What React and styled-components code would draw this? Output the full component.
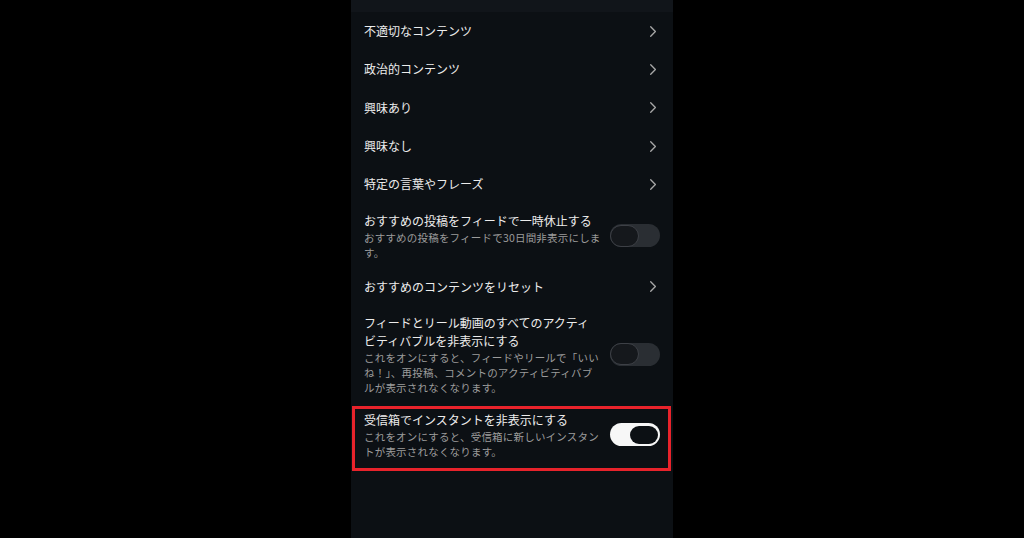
import React from "react";
import styled, { createGlobalStyle } from "styled-components";

const Global = createGlobalStyle`
  html, body { margin: 0; padding: 0; background: #000; }
  body { font-family: "Noto Sans CJK JP", "Noto Sans", sans-serif; }
`;

const Page = styled.div`
  width: 1024px;
  height: 538px;
  background: #000;
  display: flex;
  justify-content: center;
  overflow: hidden;
`;

const Screen = styled.div`
  width: 322px;
  height: 538px;
  background: #0c1014;
  display: flex;
  flex-direction: column;
`;

const TopBand = styled.div`
  height: 12px;
  background: #11151a;
  flex-shrink: 0;
`;

const LinkRow = styled.div`
  height: 38.33px;
  display: flex;
  align-items: center;
  justify-content: space-between;
  padding: 0 16px 0 13px;
  flex-shrink: 0;
`;

const Title = styled.div`
  font-size: 12px;
  line-height: 18px;
  color: #ececec;
`;

const ToggleRow = styled.div`
  position: relative;
  display: flex;
  align-items: center;
  justify-content: space-between;
  padding: 8px 13px 8px 13px;
  flex-shrink: 0;
`;

const TextCol = styled.div`
  width: 237px;
  display: flex;
  flex-direction: column;
`;

const Sub = styled.div`
  font-size: 10.5px;
  line-height: 15px;
  color: #9c9c9c;
  letter-spacing: 0.2px;
`;

const Track = styled.div`
  width: 50px;
  height: 23px;
  border-radius: 12px;
  background: ${(p) => (p.$on ? "#f7f7f7" : "#2a2e33")};
  display: flex;
  align-items: center;
  justify-content: ${(p) => (p.$on ? "flex-end" : "flex-start")};
  padding: 0 ${(p) => (p.$on ? "2px" : "0")};
  box-sizing: border-box;
  flex-shrink: 0;
`;

const Knob = styled.div`
  width: ${(p) => (p.$on ? "28px" : "29px")};
  height: ${(p) => (p.$on ? "18px" : "22px")};
  border-radius: 11px;
  background: ${(p) => (p.$on ? "#0c1014" : "#15181c")};
  box-sizing: border-box;
  border: ${(p) => (p.$on ? "none" : "1.5px solid #3d4046")};
`;

const Highlight = styled.div`
  position: absolute;
  left: 1px;
  right: 2px;
  top: 3px;
  bottom: -4px;
  border: 3px solid #e8232b;
  pointer-events: none;
`;

const Chevron = () => (
  <svg width="8" height="13" viewBox="0 0 8 13" fill="none">
    <path d="M1.7 1.7 L6.4 6.5 L1.7 11.3" stroke="#a8a8a8" strokeWidth="1.3" strokeLinecap="round" strokeLinejoin="round" />
  </svg>
);

const Toggle = ({ on }) => (
  <Track $on={on}>
    <Knob $on={on} />
  </Track>
);

const links = ["不適切なコンテンツ", "政治的コンテンツ", "興味あり", "興味なし", "特定の言葉やフレーズ"];

export default function App() {
  return (
    <>
      <Global />
      <Page>
        <Screen>
          <TopBand />
          {links.map((t) => (
            <LinkRow key={t}>
              <Title>{t}</Title>
              <Chevron />
            </LinkRow>
          ))}
          <ToggleRow>
            <TextCol>
              <Title>おすすめの投稿をフィードで一時休止する</Title>
              <Sub>おすすめの投稿をフィードで30日間非表示にします。</Sub>
            </TextCol>
            <Toggle />
          </ToggleRow>
          <LinkRow>
            <Title>おすすめのコンテンツをリセット</Title>
            <Chevron />
          </LinkRow>
          <ToggleRow>
            <TextCol>
              <Title>フィードとリール動画のすべてのアクティビティバブルを非表示にする</Title>
              <Sub>これをオンにすると、フィードやリールで「いいね！」、再投稿、コメントのアクティビティバブルが表示されなくなります。</Sub>
            </TextCol>
            <Toggle />
          </ToggleRow>
          <ToggleRow>
            <TextCol>
              <Title>受信箱でインスタントを非表示にする</Title>
              <Sub>これをオンにすると、受信箱に新しいインスタントが表示されなくなります。</Sub>
            </TextCol>
            <Toggle on />
            <Highlight />
          </ToggleRow>
        </Screen>
      </Page>
    </>
  );
}
